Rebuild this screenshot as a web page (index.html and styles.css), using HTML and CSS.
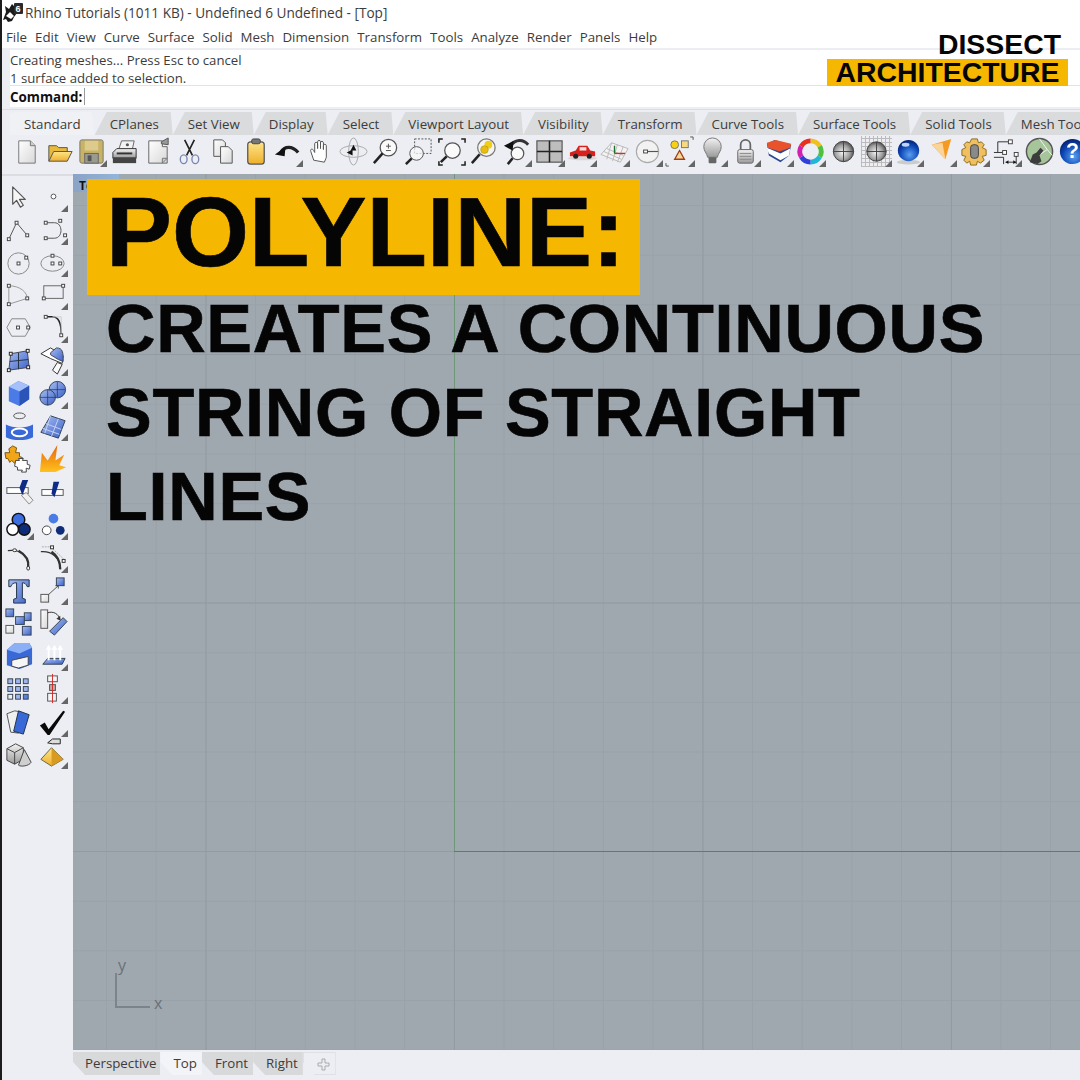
FILE: index.html
```html
<!DOCTYPE html>
<html lang="en">
  <head>
    <meta charset="UTF-8" />
    <title>Rhino Tutorials - Polyline</title>
    <link rel="stylesheet" href="styles.css">
  </head>
  <body>
    <svg class="defs" width="0" height="0">
      <defs>
        <linearGradient id="paper" x1="0" y1="0" x2="1" y2="1"><stop offset="0" stop-color="#fff"/><stop offset="1" stop-color="#d8d8d8"/></linearGradient>
        <linearGradient id="gold" x1="0" y1="0" x2="0" y2="1"><stop offset="0" stop-color="#ffe58a"/><stop offset="1" stop-color="#eeb02c"/></linearGradient>
        <linearGradient id="blue" x1="0" y1="0" x2="1" y2="1"><stop offset="0" stop-color="#a9bdf2"/><stop offset="1" stop-color="#3c62c8"/></linearGradient>
        <linearGradient id="steel" x1="0" y1="0" x2="0" y2="1"><stop offset="0" stop-color="#f2f2f2"/><stop offset="1" stop-color="#9a9a9a"/></linearGradient>
        <linearGradient id="flame" x1="0" y1="0" x2="0" y2="1"><stop offset="0" stop-color="#e8640a"/><stop offset="1" stop-color="#ffc21e"/></linearGradient>
        <radialGradient id="ball" cx=".45" cy=".55" r=".65"><stop offset="0" stop-color="#f4f4f4"/><stop offset=".55" stop-color="#a0a0a0"/><stop offset="1" stop-color="#2c2c2c"/></radialGradient>
        <radialGradient id="navy" cx=".55" cy=".7" r=".75"><stop offset="0" stop-color="#5aa0f0"/><stop offset=".6" stop-color="#0c45b4"/><stop offset="1" stop-color="#04185c"/></radialGradient>
      </defs>
    </svg>

    <header class="title-bar">
      <svg class="app-icon" width="20" height="19" viewBox="0 0 20 19">
        <path d="M0 17 3 9 2 3 6 6 9 1 12 4 14 10 11 14 9 18 5 19 3 16z" fill="#1a1a1a"/>
        <path d="M3 13 7 9 11 13 8 16z" fill="#fff"/>
        <rect x="11" y="0" width="9" height="11" rx="1" fill="#2a2a2a"/>
        <text x="12.500" y="9" class="app-six">6</text>
      </svg>
      <span>Rhino Tutorials (1011 KB) - Undefined 6 Undefined - [Top]</span>
    </header>

    <nav class="menu-bar">
      <span>File</span><span>Edit</span><span>View</span><span>Curve</span><span>Surface</span><span>Solid</span><span>Mesh</span><span>Dimension</span><span>Transform</span><span>Tools</span><span>Analyze</span><span>Render</span><span>Panels</span><span>Help</span>
    </nav>

    <section class="command-area">
      <div class="history">
        <p>Creating meshes... Press Esc to cancel</p>
        <p>1 surface added to selection.</p>
      </div>
      <div class="prompt"><b>Command:</b><i class="caret"></i></div>
    </section>

    <div class="tab-strip">
      <span class="tab active">Standard</span>
      <span class="tab">CPlanes</span>
      <span class="tab">Set View</span>
      <span class="tab">Display</span>
      <span class="tab">Select</span>
      <span class="tab">Viewport Layout</span>
      <span class="tab">Visibility</span>
      <span class="tab">Transform</span>
      <span class="tab">Curve Tools</span>
      <span class="tab">Surface Tools</span>
      <span class="tab">Solid Tools</span>
      <span class="tab">Mesh Tools</span>
    </div>

    <div class="tool-row">
      <span class="tool"><svg viewBox="0 0 32 32"><path d="M8 5h12l5 5v18H8z" fill="url(#paper)" stroke="#777"/><path d="M20 5v5h5" fill="#ccc" stroke="#777"/></svg></span>
      <span class="tool"><svg viewBox="0 0 32 32"><path d="M5 26V10h8l2 2h9v4" fill="#e9b93a" stroke="#555"/><path d="M5 26 10 16h19l-5 10z" fill="url(#gold)" stroke="#555"/></svg></span>
      <span class="tool more"><svg viewBox="0 0 32 32"><rect x="4" y="4" width="24" height="24" rx="2" fill="#c8b263" stroke="#777"/><rect x="9" y="5" width="14" height="10" fill="#dccb8c"/><rect x="9" y="18" width="14" height="10" fill="#9a9a90" stroke="#666"/><rect x="12" y="20" width="4" height="6" fill="#555"/></svg></span>
      <span class="tool"><svg viewBox="0 0 32 32"><path d="M10 14 13 5h13l-2 9z" fill="#f2f2f2" stroke="#666"/><circle cx="19" cy="9" r="1.6" fill="#555"/><path d="M4 17 8 13h20v10H4z" fill="url(#steel)" stroke="#333"/><rect x="4" y="22" width="24" height="6" fill="#444"/><rect x="8" y="17" width="16" height="2" fill="#333"/></svg></span>
      <span class="tool"><svg viewBox="0 0 32 32"><path d="M7 5h14v6h5v17H7z" fill="url(#paper)" stroke="#666"/><path d="M20 6 27 2v7l-7-1z" fill="#999" stroke="#555"/><path d="M21 28l5-5h-5z" fill="#ccc" stroke="#777"/></svg></span>
      <span class="tool"><svg viewBox="0 0 32 32"><path d="M11 4 19 20M21 4 13 20" stroke="#222" stroke-width="1.7" fill="none"/><ellipse cx="10" cy="24" rx="3.5" ry="4.5" fill="none" stroke="#7d86b0" stroke-width="1.4"/><ellipse cx="22" cy="24" rx="3.5" ry="4.5" fill="none" stroke="#7d86b0" stroke-width="1.4"/></svg></span>
      <span class="tool"><svg viewBox="0 0 32 32"><path d="M7 4h9l3 3v14H7z" fill="url(#paper)" stroke="#555"/><path d="M14 11h8l4 4v13H14z" fill="url(#paper)" stroke="#555"/></svg></span>
      <span class="tool"><svg viewBox="0 0 32 32"><rect x="8" y="6" width="17" height="23" rx="3" fill="url(#gold)" stroke="#555" stroke-width="1.3"/><rect x="12" y="3" width="9" height="5" rx="2" fill="#777" stroke="#444"/></svg></span>
      <span class="tool more"><svg viewBox="0 0 32 32"><path d="M9 17C13 10 21 10 27 17" fill="none" stroke="#222" stroke-width="3.4"/><path d="M3 19 14 11 13 21z" fill="#111"/></svg></span>
      <span class="tool"><svg viewBox="0 0 32 32"><path d="M9 25 6 16c-1-3 2-3 3-1l1 2V8c0-2 3-2 3 0v5-7c0-2 3-2 3 0v7-6c0-2 3-2 3 0v7-4c0-2 3-2 3 0v12l-2 5z" fill="#fff" stroke="#555" stroke-linejoin="round"/></svg></span>
      <span class="tool"><svg viewBox="0 0 32 32"><ellipse cx="16" cy="16" rx="14" ry="6" fill="none" stroke="#aaa"/><ellipse cx="16" cy="16" rx="5" ry="14" fill="none" stroke="#aaa"/><path d="M16 9l3 6h-6z" fill="#111"/><path d="M9 17l6-3v6z" fill="#111"/></svg></span>
      <span class="tool"><svg viewBox="0 0 32 32"><circle cx="19" cy="12" r="8.5" fill="#fafafa" stroke="#555" stroke-width="1.3"/><path d="M13 18 4 28" stroke="#222" stroke-width="2.6"/><path d="M19 8v5M16.5 10.5h5M16.5 15h5" stroke="#555"/></svg></span>
      <span class="tool"><svg viewBox="0 0 32 32"><rect x="12" y="3" width="17" height="15" fill="none" stroke="#555" stroke-dasharray="2 1.5"/><circle cx="14" cy="18" r="7" fill="#fafafa" fill-opacity=".7" stroke="#555"/><path d="M9 23 3 29" stroke="#222" stroke-width="2.6"/></svg></span>
      <span class="tool"><svg viewBox="0 0 32 32"><circle cx="17" cy="15" r="8" fill="#fafafa" stroke="#555" stroke-width="1.3"/><path d="M11 21 5 27" stroke="#222" stroke-width="2.6"/><path d="M3 7V3h4M26 3h4v4M3 26v4h4M26 30h4v-4" fill="none" stroke="#222" stroke-width="1.6"/></svg></span>
      <span class="tool"><svg viewBox="0 0 32 32"><circle cx="19" cy="12" r="9" fill="#f4f4f4" stroke="#777" stroke-width="1.3"/><circle cx="21" cy="9" r="4" fill="#f3cd14"/><circle cx="17" cy="14" r="4" fill="#e6bd10" stroke="#a08a10" stroke-width=".5"/><path d="M12 19 4 28" stroke="#222" stroke-width="2.6"/></svg></span>
      <span class="tool more"><svg viewBox="0 0 32 32"><circle cx="17" cy="18" r="6.5" fill="#fafafa" stroke="#555" stroke-width="1.3"/><path d="M12 23 7 29" stroke="#222" stroke-width="2.6"/><path d="M10 10C15 3 23 3 28 9" fill="none" stroke="#333" stroke-width="3"/><path d="M3 10 13 5 12 15z" fill="#111"/></svg></span>
      <span class="tool more"><svg viewBox="0 0 32 32"><rect x="3" y="5" width="26" height="22" fill="#bdbdbd" stroke="#555" stroke-width="1.2"/><path d="M16 5v22M3 16h26" stroke="#222" stroke-width="1.6"/></svg></span>
      <span class="tool more"><svg viewBox="0 0 32 32"><ellipse cx="16" cy="23" rx="15" ry="2" fill="#d8d8d8"/><path d="M3 21v-4l6-2 3-5h9l3 5 5 1v5z" fill="#d8201c"/><rect x="13" y="11.500" width="7" height="3.500" fill="#f6dede"/><circle cx="9" cy="21" r="2.600" fill="#222"/><circle cx="23" cy="21" r="2.600" fill="#222"/></svg></span>
      <span class="tool more"><svg viewBox="0 0 32 32"><path d="M2 19 13 7 30 13 22 27z" fill="#f3f3f3" stroke="#b8b8b8"/><path d="M8 13 25 20M5 16 23 24M13 7 8 24M19 9 14 26M25 11 19 27" stroke="#bbb"/><path d="M16 18H27" stroke="#d03030" stroke-width="1.400"/><path d="M16 18V10" stroke="#207030" stroke-width="1.400"/></svg></span>
      <span class="tool more"><svg viewBox="0 0 32 32"><circle cx="16" cy="16" r="11.500" fill="#f2f2f2" stroke="#aaa" stroke-width="1.200"/><rect x="12" y="14.500" width="4" height="3" fill="#fff" stroke="#444"/><path d="M16 16h11" stroke="#555" stroke-width="1.200"/></svg></span>
      <span class="tool more"><svg viewBox="0 0 32 32"><circle cx="10" cy="9" r="4" fill="#f6d118" stroke="#777"/><rect x="17" y="5" width="7" height="7" fill="#f6d980" stroke="#777"/><path d="M15 15 20 24H10z" fill="#f7d9a0" stroke="#a04010" stroke-width="1.400"/><path d="M26 1h3v3M1 28v3h3" fill="none" stroke="#555"/></svg></span>
      <span class="tool more"><svg viewBox="0 0 32 32"><path d="M11 22C10 17 7 16 7 11a9 9 0 0 1 18 0c0 5-3 6-4 11z" fill="url(#steel)" stroke="#777"/><rect x="12" y="22" width="8" height="6" rx="1" fill="#666"/></svg></span>
      <span class="tool more"><svg viewBox="0 0 32 32"><path d="M11 14V9a5 5 0 0 1 10 0v5" fill="none" stroke="#666" stroke-width="1.800"/><rect x="8" y="14" width="16" height="14" rx="2" fill="url(#steel)" stroke="#666"/><path d="M10 18h12M10 21h12M10 24h12" stroke="#888"/></svg></span>
      <span class="tool more"><svg viewBox="0 0 32 32"><path d="M4 8 12 4 29 9 27 20 18 27 6 20z" fill="#2b4a94"/><path d="M4 12 18 18 28 13 27 20 18 25 6 18z" fill="#fff"/><path d="M4 7 13 4 29 8 28 12 17 16 5 12z" fill="#e8532c"/></svg></span>
      <span class="tool more"><svg viewBox="0 0 32 32"><g fill="none" stroke-width="5"><path d="M16 5a11 11 0 0 1 9.500 5.500" stroke="#f0c020"/><path d="M25.500 10.500a11 11 0 0 1 0 11" stroke="#50c040"/><path d="M25.500 21.500A11 11 0 0 1 16 27" stroke="#20b8d8"/><path d="M16 27a11 11 0 0 1-9.500-5.500" stroke="#3040d8"/><path d="M6.500 21.500a11 11 0 0 1 0-11" stroke="#d020b0"/><path d="M6.500 10.500A11 11 0 0 1 16 5" stroke="#e83020"/></g></svg></span>
      <span class="tool"><svg viewBox="0 0 32 32"><circle cx="16" cy="16" r="10.500" fill="url(#ball)" stroke="#444"/><path d="M16 5.500v21M5.500 16h21" stroke="#444"/></svg></span>
      <span class="tool more"><svg class="meshed" viewBox="0 0 32 32"><circle cx="16" cy="16" r="10" fill="url(#ball)" stroke="#444"/><path d="M16 6v20M6 16h20" stroke="#444"/></svg></span>
      <span class="tool more"><svg viewBox="0 0 32 32"><ellipse cx="16" cy="27" rx="12" ry="2.500" fill="#ccc"/><circle cx="16" cy="15" r="11" fill="url(#navy)"/><ellipse cx="13" cy="9" rx="4" ry="2" fill="#bcd4f8"/></svg></span>
      <span class="tool more"><svg viewBox="0 0 32 32"><path d="M6 9 26 3 20 24z" fill="#f59a20"/><path d="M6 9 17 7 20 24z" fill="#fbd49a"/></svg></span>
      <span class="tool more"><svg viewBox="0 0 32 32"><path d="M13 3h6l1 4 3-1 3 3-2 3 4 2v6l-4 1 2 4-4 3-3-2-1 4h-6l-1-4-3 2-3-3 2-4-4-1v-6l4-2-2-3 3-3 3 1z" fill="#f0c060" stroke="#8a6a20"/><rect x="12" y="9" width="8" height="14" rx="3" fill="#8a8a8a" stroke="#444"/></svg></span>
      <span class="tool more"><svg viewBox="0 0 32 32"><path d="M7 6h11M3 22h10M13 22v7M3 17h10M7 6v11" stroke="#333" fill="none"/><rect x="18" y="4" width="4" height="4" fill="#fff" stroke="#444"/><rect x="12" y="15" width="4" height="4" fill="#fff" stroke="#444"/><rect x="24" y="17" width="4" height="4" fill="#fff" stroke="#444"/><path d="M15 27h11M26 21v8" stroke="#333"/><path d="M15 27l3-2v4zM26 27l-3-2v4z" fill="#111"/></svg></span>
      <span class="tool"><svg viewBox="0 0 32 32"><circle cx="16" cy="16" r="13.500" fill="#a6c59a" stroke="#555" stroke-width="1.500"/><path d="M16 3 24 14 8 25M24 14 29 20" stroke="#f4f4f4" fill="none"/><path d="M6 27 9 19l4-2 4-5 3 3-4 5 2 6-4 3z" fill="#3c3c3c"/></svg></span>
      <span class="tool"><svg viewBox="0 0 32 32"><circle cx="16" cy="16" r="13" fill="url(#navy)"/><text x="16" y="23" class="help-mark">?</text></svg></span>
    </div>

    <main class="workspace">
      <aside class="side-tools">
        <span class="tool"><svg viewBox="0 0 32 32"><path d="M10 6v18l4-4 4 7 3-2-4-6h6z" fill="#f6f6f6" stroke="#555" stroke-width="1.200" stroke-linejoin="round"/></svg></span>
        <span class="tool more"><svg viewBox="0 0 32 32"><circle cx="17" cy="16" r="2.500" fill="#fff" stroke="#555"/></svg></span>
        <span class="tool"><svg viewBox="0 0 32 32"><path d="M6 26 14 9 25 22" fill="none" stroke="#555"/><g fill="#fff" stroke="#444"><rect x="4.500" y="24.500" width="3" height="3"/><rect x="12.500" y="7.500" width="3" height="3"/><rect x="23.500" y="20.500" width="3" height="3"/></g></svg></span>
        <span class="tool more"><svg viewBox="0 0 32 32"><path d="M9 9H18C27 9 27 25 18 25H9" fill="none" stroke="#555"/><g fill="#fff" stroke="#444"><rect x="7.500" y="7.500" width="3" height="3"/><rect x="22.500" y="5.500" width="3" height="3"/><rect x="27.500" y="20.500" width="3" height="3"/><rect x="7.500" y="23.500" width="3" height="3"/></g></svg></span>
        <span class="tool"><svg viewBox="0 0 32 32"><circle cx="16" cy="17" r="11" fill="none" stroke="#888"/><g fill="#fff" stroke="#444"><rect x="14.500" y="15.500" width="3" height="3"/><rect x="22.500" y="9.500" width="3" height="3"/></g></svg></span>
        <span class="tool more"><svg viewBox="0 0 32 32"><ellipse cx="16" cy="17" rx="12" ry="8" fill="none" stroke="#888"/><g fill="#fff" stroke="#444"><rect x="14.500" y="7.500" width="3" height="3"/><rect x="14.500" y="15.500" width="3" height="3"/><rect x="22.500" y="15.500" width="3" height="3"/></g></svg></span>
        <span class="tool"><svg viewBox="0 0 32 32"><path d="M6 7C18 7 25 14 25 20L6 26z" fill="none" stroke="#999"/><g fill="#fff" stroke="#444"><rect x="4.500" y="5.500" width="3" height="3"/><rect x="23.500" y="18.500" width="3" height="3"/><rect x="4.500" y="24.500" width="3" height="3"/></g></svg></span>
        <span class="tool more"><svg viewBox="0 0 32 32"><rect x="7" y="7" width="20" height="13" fill="none" stroke="#666"/><g fill="#fff" stroke="#444"><rect x="25.500" y="5.500" width="3" height="3"/><rect x="5.500" y="18.500" width="3" height="3"/></g></svg></span>
        <span class="tool"><svg viewBox="0 0 32 32"><path d="M9 7h14l5 9-5 9H9l-5-9z" fill="none" stroke="#888"/><g fill="#fff" stroke="#444"><rect x="14" y="14.500" width="3" height="3"/><rect x="24.500" y="14.500" width="3" height="3"/></g></svg></span>
        <span class="tool more"><svg viewBox="0 0 32 32"><path d="M9 5H16C22 5 25 11 25 23" fill="none" stroke="#222" stroke-width="1.600"/><path d="M16 5h9v18" fill="none" stroke="#ccc"/><g fill="#fff" stroke="#444"><rect x="7.500" y="3.500" width="3" height="3"/><rect x="23.500" y="22.500" width="3" height="3"/></g></svg></span>
        <span class="tool"><svg viewBox="0 0 32 32"><path d="M8 9 25 6 27 23 6 26z" fill="url(#blue)" stroke="#445"/><path d="M16 8 16 25M7 17 26 15" stroke="#234"/><g fill="#fff" stroke="#222"><rect x="6.500" y="7.500" width="3" height="3"/><rect x="24" y="4.500" width="3" height="3"/><rect x="24.500" y="21.500" width="3" height="3"/><rect x="4.500" y="24.500" width="3" height="3"/></g></svg></span>
        <span class="tool more"><svg viewBox="0 0 32 32"><path d="M4 9 14 3 27 11 26 19 14 14z" fill="#fff" stroke="#333"/><path d="M14 8 20 3C27 3 27 8 27 17L22 15 14 10z" fill="url(#blue)" stroke="#445"/><path d="M21 18 26 20 21 30 16 26z" fill="#fafafa" stroke="#333"/></svg></span>
        <span class="tool"><svg viewBox="0 0 32 32"><path d="M16 3 27 8v14L17 29 6 24V9z" fill="#4a7be6"/><path d="M16 3 27 8 17 14 6 9z" fill="#a6c0fa"/><path d="M17 14 27 8v14L17 29z" fill="#2b54b8"/></svg></span>
        <span class="tool more"><svg viewBox="0 0 32 32"><circle cx="21" cy="12" r="8.500" fill="url(#blue)" stroke="#345"/><circle cx="11" cy="20" r="8" fill="url(#blue)" stroke="#345"/><path d="M21 4v16M13 12h16M11 12v16M3 20h16" stroke="#234" stroke-width=".7"/></svg></span>
        <span class="tool"><svg viewBox="0 0 32 32"><ellipse cx="17" cy="5" rx="6" ry="3" fill="none" stroke="#555"/><path d="M3 14C10 18 24 18 31 14V27C24 31 10 31 3 27z" fill="#3968d8"/><ellipse cx="17" cy="22" rx="8" ry="4" fill="none" stroke="#fff" stroke-width="2"/></svg></span>
        <span class="tool more"><svg viewBox="0 0 32 32"><path d="M4 22 14 5 29 10 22 28z" fill="url(#blue)" stroke="#345"/><path d="M9 13 25 19M6 18 23 24M14 5 8 23M22 8 15 26" stroke="#c5d2f5"/></svg></span>
        <span class="tool"><svg viewBox="0 0 32 32"><path d="M2 10h5l-1-4 4-3 4 2-1 5h4v4l3 1-2 4h-4l-2 2-3-3-2 2-2-4H3z" fill="#f0a618" stroke="#7a5410"/><path d="M13 18h4l-1-2h5l-1 2h5v4l3 1-1 4-3-1v4h-5l1-2h-5v-3l-3-1z" fill="#fff" stroke="#444"/></svg></span>
        <span class="tool"><svg viewBox="0 0 32 32"><path d="M3 30 5 10 11 18 21 2 19 18 28 12 23 23 30 25 19 30z" fill="url(#flame)"/></svg></span>
        <span class="tool"><svg viewBox="0 0 32 32"><rect x="4" y="12" width="22" height="6" fill="#fff" stroke="#555"/><path d="M20 4h6l-6 16-3-8z" fill="#0e2c86"/><path d="M19 20 24 17 31 25 27 29z" fill="#f0f0f0" stroke="#888"/></svg></span>
        <span class="tool"><svg viewBox="0 0 32 32"><rect x="5" y="14" width="22" height="6" fill="#fff" stroke="#555"/><path d="M17 6h6l-5 16-3-4z" fill="#0e2c86"/></svg></span>
        <span class="tool more"><svg viewBox="0 0 32 32"><circle cx="16" cy="11" r="6.500" fill="#3d6ee0" stroke="#111" stroke-width="1.500"/><circle cx="10" cy="21" r="6" fill="#fff" stroke="#111" stroke-width="1.500"/><circle cx="22" cy="21" r="6" fill="#0e2c78" stroke="#111" stroke-width="1.500"/></svg></span>
        <span class="tool more"><svg viewBox="0 0 32 32"><circle cx="17" cy="10" r="5" fill="#4a7be6"/><circle cx="10" cy="22" r="4.500" fill="#fff" stroke="#444"/><circle cx="24" cy="22" r="4.500" fill="#0e2c78"/></svg></span>
        <span class="tool"><svg viewBox="0 0 32 32"><path d="M5 9C17 7 27 14 26 26" fill="none" stroke="#333" stroke-width="1.300"/><path d="M16 9C23 13 27 19 26 26" fill="none" stroke="#333" stroke-width="2.400"/><ellipse cx="12" cy="8.500" rx="2" ry="1.500" fill="#fff" stroke="#333"/><ellipse cx="26" cy="27" rx="1.500" ry="2" fill="#fff" stroke="#333"/></svg></span>
        <span class="tool more"><svg viewBox="0 0 32 32"><path d="M4 10C15 9 24 16 24 28" fill="none" stroke="#333" stroke-width="1.300"/><path d="M15 10C21 14 24 20 24 28" fill="none" stroke="#333" stroke-width="2.400"/><path d="M5 5H14L28 18" fill="none" stroke="#aaa" stroke-dasharray="2 1"/><g fill="#fff" stroke="#333"><rect x="14" y="4" width="3" height="3"/><rect x="26" y="18" width="3" height="3"/></g></svg></span>
        <span class="tool"><svg viewBox="0 0 32 32"><path d="M6 5H27V12H25C24 9 22 8 20 8V24L23 25V29H11V25L14 24V8C11 8 9 9 8 12H6z" fill="url(#blue)" stroke="#234"/></svg></span>
        <span class="tool more"><svg viewBox="0 0 32 32"><path d="M11 21 22 11" stroke="#555"/><path d="M19 11h3v3" fill="none" stroke="#555"/><rect x="4" y="20" width="8" height="8" fill="url(#paper)" stroke="#555"/><rect x="20" y="3" width="8" height="8" fill="url(#blue)" stroke="#345"/></svg></span>
        <span class="tool"><svg viewBox="0 0 32 32"><rect x="3" y="2" width="8" height="8" fill="url(#blue)" stroke="#345"/><rect x="22" y="6" width="7" height="8" fill="url(#blue)" stroke="#345"/><rect x="13" y="10" width="9" height="8" fill="url(#blue)" stroke="#345"/><rect x="3" y="19" width="8" height="8" fill="url(#paper)" stroke="#555"/><rect x="20" y="20" width="9" height="9" fill="url(#blue)" stroke="#345"/></svg></span>
        <span class="tool"><svg viewBox="0 0 32 32"><rect x="4" y="3" width="7" height="19" fill="url(#paper)" stroke="#555"/><path d="M11 6C17 4 22 7 24 13" fill="none" stroke="#333"/><path d="M24 9l0 5-4-2z" fill="#333"/><path d="M13 25 27 11 31 15 18 29z" fill="url(#blue)" stroke="#345"/></svg></span>
        <span class="tool"><svg viewBox="0 0 32 32"><path d="M4 10 12 3H27L30 8V25L17 30 4 26z" fill="#3968d8"/><path d="M4 10 17 14 30 8 27 3H12z" fill="#8cb0f5"/><path d="M13 20 26 17V26L16 29 9 27V21z" fill="#f6f6f6" stroke="#444"/></svg></span>
        <span class="tool more"><svg viewBox="0 0 32 32"><path d="M6 25 11 19H29L26 25z" fill="url(#blue)" stroke="#345"/><path d="M12 21V8M18 21V8M24 21V8" stroke="#fff" stroke-width="2"/><path d="M9 10 12 5 15 10zM15 10 18 5 21 10zM21 10 24 5 27 10z" fill="#fff"/></svg></span>
        <span class="tool"><svg viewBox="0 0 32 32"><g fill="#9fb4ec" stroke="#345"><rect x="5" y="6" width="5" height="5"/><rect x="13" y="6" width="5" height="5"/><rect x="21" y="6" width="5" height="5"/><rect x="5" y="14" width="5" height="5"/><rect x="13" y="14" width="5" height="5"/><rect x="21" y="14" width="5" height="5"/><rect x="5" y="22" width="5" height="5" fill="#eee"/><rect x="13" y="22" width="5" height="5"/><rect x="21" y="22" width="5" height="5" fill="#5a80e0"/></g></svg></span>
        <span class="tool more"><svg viewBox="0 0 32 32"><g fill="#f4f4f4" stroke="#555"><rect x="11" y="3" width="10" height="6"/><rect x="13" y="12" width="6" height="6" fill="#c9a8a0"/><rect x="11" y="21" width="9" height="8"/></g><path d="M16 1V31" stroke="#d03030"/></svg></span>
        <span class="tool"><svg viewBox="0 0 32 32"><path d="M4 8 12 5 18 6 16 28 8 27z" fill="#f0f0f0" stroke="#555"/><path d="M16 5 27 9 21 29 11 26z" fill="#3968d8" stroke="#234"/></svg></span>
        <span class="tool more"><svg viewBox="0 0 32 32"><path d="M3 20 8 17 12 24 27 5 29 6 13 30h-2z" fill="#0a0a0a"/></svg></span>
        <span class="tool"><svg viewBox="0 0 32 32"><path d="M4 11 13 6 21 10 21 22 12 27 4 23z" fill="url(#steel)" stroke="#444"/><path d="M4 11 12 15 21 10M12 15V27" fill="none" stroke="#444"/><path d="M16 28 22 12 29 25C27 29 18 30 16 28z" fill="#cfcfcf" stroke="#444"/></svg></span>
        <span class="tool more"><svg viewBox="0 0 32 32"><path d="M15 10 4 22 15 29 27 22z" fill="url(#gold)" stroke="#664"/><path d="M15 10 27 22 15 29z" fill="#d89a20"/><path d="M11 5 16 1H24V6H16z" fill="#ddd" stroke="#222"/></svg></span>
      </aside>

      <section class="viewport">
        <span class="view-label">Top</span>
        <i class="axis axis-green"></i>
        <i class="axis axis-red"></i>
        <div class="world-axes"><span class="axis-y">y</span><span class="axis-x">x</span></div>
        <div class="caption">
          <h1>POLYLINE:</h1>
          <p>CREATES A CONTINUOUS STRING OF STRAIGHT LINES</p>
        </div>
      </section>
    </main>

    <footer class="view-tabs">
      <span class="view-tab">Perspective</span>
      <span class="view-tab active">Top</span>
      <span class="view-tab">Front</span>
      <span class="view-tab">Right</span>
      <span class="view-tab add">
        <svg width="13" height="13" viewBox="0 0 13 13"><path d="M5 1h3v4h4v3H8v4H5V8H1V5h4z" fill="none" stroke="#aaa"/></svg>
      </span>
    </footer>

    <div class="brand">
      <span>DISSECT</span>
      <strong>ARCHITECTURE</strong>
    </div>
  </body>
</html>
```

FILE: styles.css
```css
* {
  margin: 0;
  padding: 0;
  box-sizing: border-box;
}

body {
  position: relative;
  width: 1080px;
  height: 1080px;
  overflow: hidden;
  background: #eceef3;
  border-left: 2px solid #1c1c1c;
  font-family: "Open Sans", sans-serif;
  font-size: 13.3px;
  color: #3c3c3c;
}

.defs {
  position: absolute;
}

.title-bar {
  height: 25px;
  margin-left: -2px;
  background: #fff;
  display: flex;
  align-items: center;
  gap: 2px;
  padding-left: 3px;
  font-size: 13.6px;
}

.app-six {
  font: bold 9px "Liberation Sans", sans-serif;
  fill: #fff;
}

.menu-bar {
  height: 23px;
  background: #fff;
  display: flex;
  align-items: center;
  gap: 8px;
  padding-left: 4px;
}

.command-area {
  height: 57px;
  margin-top: 2px;
  margin-left: 8px;
  background: #fff;
  font-size: 13.2px;
}

.history {
  height: 36px;
  padding-top: 2px;
  border-bottom: 1px solid #e2e2e8;
  line-height: 17.5px;
}

.prompt {
  height: 21px;
  display: flex;
  align-items: center;
  color: #111;
  font-size: 13.4px;
}

.caret {
  width: 1px;
  height: 17px;
  margin-left: 2px;
  background: #999;
}

.tab-strip {
  height: 26px;
  margin-top: 2px;
  padding-left: 8px;
  display: flex;
  align-items: flex-end;
  border-top: 1px solid #dcdde2;
  white-space: nowrap;
  overflow: hidden;
}

.tab {
  height: 23px;
  flex: none;
  padding: 3px 14px 0 15px;
  background: #dadbdc;
  clip-path: polygon(0 100%, 12px 0, calc(100% - 2px) 0, 100% 100%);
}

.tab.active {
  background: #f0f1f5;
  clip-path: polygon(0 2px, 4px 0, calc(100% - 3px) 0, 100% 100%, 0 100%);
  padding: 3px 14px 0 14px;
}

.tool-row {
  height: 39px;
  padding: 0 0 5px 8px;
  display: flex;
  align-items: center;
  white-space: nowrap;
}

.tool {
  position: relative;
  flex: none;
  width: 32.7px;
  height: 32.9px;
  display: flex;
  align-items: center;
  justify-content: center;
}

.tool svg {
  width: 31px;
  height: 31px;
  filter: blur(0.25px);
}

.tool.more::after {
  content: "";
  position: absolute;
  right: 1px;
  bottom: 1px;
  border-style: solid;
  border-width: 0 0 7px 7px;
  border-color: transparent transparent #666 transparent;
}

.tool .meshed {
  background: repeating-linear-gradient(0deg, #bbb 0 1px, transparent 1px 4px),
    repeating-linear-gradient(90deg, #bbb 0 1px, transparent 1px 4px);
}

.workspace {
  height: 876px;
  display: flex;
}

.side-tools {
  width: 72px;
  flex: none;
  margin-left: -1px;
  padding-top: 4px;
  display: grid;
  grid-template-columns: 34px 34px;
  grid-auto-rows: 32.8px;
  border-top: 2px solid #dcdde2;
  align-content: start;
}

.side-tools .tool {
  width: 34px;
}

.viewport {
  position: relative;
  flex: 1;
  overflow: hidden;
  background-color: #9fa7af;
  background-image:
    linear-gradient(to right, #929aa2 1px, transparent 1px),
    linear-gradient(to bottom, #929aa2 1px, transparent 1px),
    linear-gradient(to right, #99a1a9 1px, transparent 1px),
    linear-gradient(to bottom, #99a1a9 1px, transparent 1px);
  background-size:
    248.5px 100%,
    100% 248.5px,
    49.7px 100%,
    100% 49.7px;
  background-position:
    132.5px 0,
    0 180px,
    33px 0,
    0 31px;
}

.view-label {
  position: absolute;
  left: 0;
  top: 0;
  width: 46px;
  height: 18px;
  padding: 3px 0 0 6px;
  background: linear-gradient(to right, #8aa3c6, #93b4d8);
  color: #111;
  font-weight: 700;
  font-size: 12px;
}

.axis {
  position: absolute;
}

.axis-green {
  left: 381px;
  top: 0;
  width: 1px;
  height: 677px;
  background: #6f9a7a;
}

.axis-red {
  left: 381px;
  top: 677px;
  right: 0;
  height: 1px;
  background: #a25c5e;
}

.world-axes {
  position: absolute;
  left: 42px;
  top: 799px;
  width: 35px;
  height: 35px;
  border-left: 2px solid #7c838c;
  border-bottom: 2px solid #7c838c;
  color: #6a717a;
  font-size: 16px;
}

.axis-y {
  position: absolute;
  left: 1px;
  top: -19px;
}

.axis-x {
  position: absolute;
  left: 37px;
  top: 19px;
}

.caption {
  position: absolute;
  left: 14px;
  top: 5px;
  font-family: "Liberation Sans", sans-serif;
  font-weight: 700;
  color: #050505;
  -webkit-text-stroke: 0.6px #050505;
}

.caption h1 {
  width: 553px;
  height: 116px;
  padding-left: 19px;
  background: #f6b700;
  font-size: 99px;
  line-height: 106px;
}

.caption p {
  width: 930px;
  margin-top: -8px;
  padding-left: 19px;
  font-size: 68.5px;
  line-height: 84px;
  letter-spacing: 0.7px;
}

.view-tabs {
  height: 30px;
  padding: 2px 0 0 71px;
  display: flex;
  align-items: flex-start;
}

.view-tab {
  height: 23px;
  padding: 2px 5px 0 13px;
  background: #d8d9da;
  clip-path: polygon(0 0, 100% 0, 100% 100%, 12px 100%, 0 10px);
}

.view-tab:first-child {
  padding-left: 12px;
  padding-right: 4px;
}

.view-tab.active {
  background: #f3f4f7;
}

.view-tab.add {
  width: 33px;
  background: #eceef3;
  border: 1px solid #dfe0e5;
  padding: 4px 0 0 13px;
}

.brand {
  position: absolute;
  right: 12px;
  top: 30px;
  width: 241px;
  font-family: "Liberation Sans", sans-serif;
  font-weight: 700;
  font-size: 28.4px;
  color: #050505;
  text-align: right;
}

.brand span {
  display: block;
  height: 29px;
  line-height: 29px;
  padding-right: 7px;
}

.brand strong {
  display: block;
  height: 27px;
  line-height: 27px;
  background: #f6b700;
  text-align: center;
}

.help-mark {
  font: bold 22px "Liberation Sans", sans-serif;
  fill: #fff;
  text-anchor: middle;
}
```
